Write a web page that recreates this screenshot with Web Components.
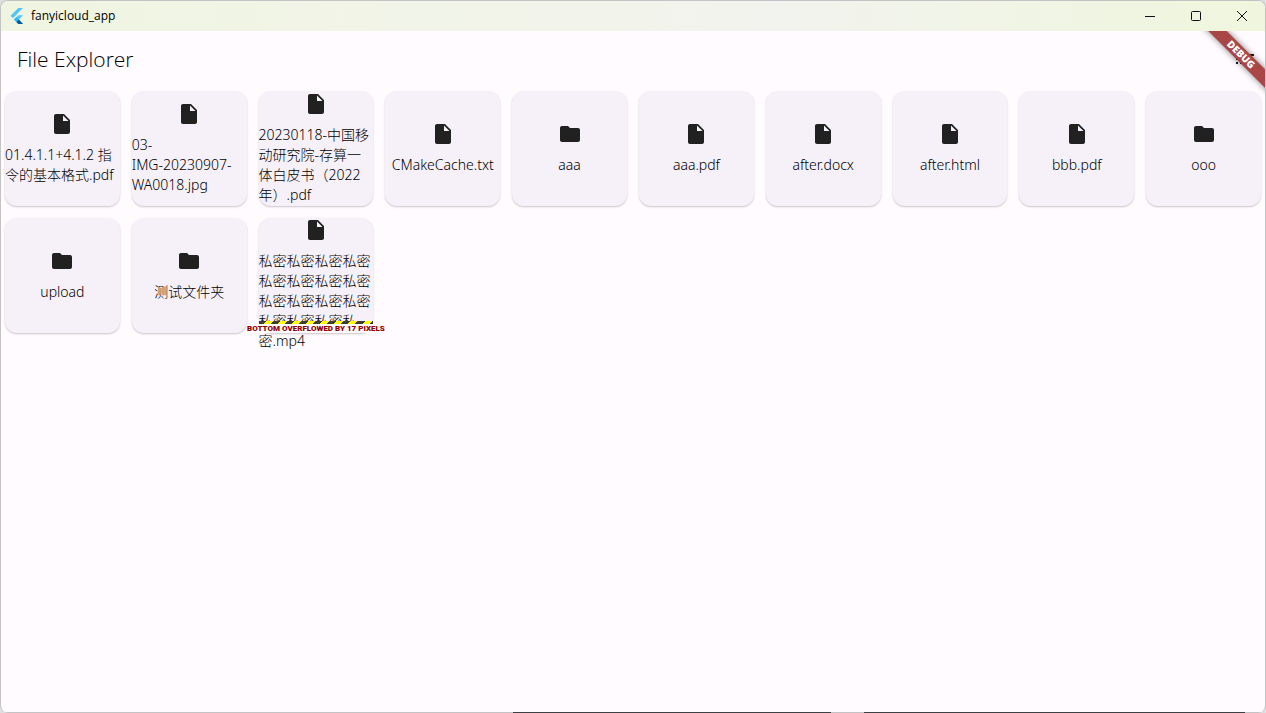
<!DOCTYPE html>
<html lang="zh-CN">
<head>
<meta charset="utf-8">
<title>fanyicloud_app</title>
<style>
html, body { height: 100%; }
body { margin: 0; background: #dedee0; overflow: hidden; }
</style>
</head>
<body>
<app-window caption="fanyicloud_app">
  <app-bar heading="File Explorer"></app-bar>
  <file-grid>
    <file-card>01.4.1.1+4.1.2 指令的基本格式.pdf</file-card>
    <file-card>03-<br>IMG-20230907-WA0018.jpg</file-card>
    <file-card>20230118-中国移动研究院-存算一体白皮书（2022年）.pdf</file-card>
    <file-card>CMakeCache.txt</file-card>
    <file-card kind="folder">aaa</file-card>
    <file-card>aaa.pdf</file-card>
    <file-card>after.docx</file-card>
    <file-card>after.html</file-card>
    <file-card>bbb.pdf</file-card>
    <file-card kind="folder">ooo</file-card>
    <file-card kind="folder">upload</file-card>
    <file-card kind="folder">测试文件夹</file-card>
    <file-card overflow="BOTTOM OVERFLOWED BY 17 PIXELS">私密私密私密私密私密私密私密私密私密私密私密私密私密私密私密私密.mp4</file-card>
  </file-grid>
</app-window>

<script>
const define = (name, markup, setup) => {
  const template = document.createElement('template');
  template.innerHTML = markup;
  customElements.define(name, class extends HTMLElement {
    connectedCallback() {
      if (this.shadowRoot) return;
      const root = this.attachShadow({ mode: 'open' });
      root.append(template.content.cloneNode(true));
      if (setup) setup(this, root);
    }
  });
};

define('flutter-logo', `
<style>
:host { display: block; width: 16px; height: 16px; }
svg { display: block; }
</style>
<svg width="16" height="16" viewBox="0 0 16 16" aria-hidden="true">
  <path fill="#54c5f8" d="M9.3 0H14L3.9 10.2 1.5 7.8z"/>
  <path fill="#54c5f8" d="M9.3 7.3H14L9.9 11.4 14 16H9.3L5 11.6z"/>
  <path fill="#01579b" d="M7.4 13.9 9.8 11.4 14 16H9.3z"/>
  <path fill="#29b6f6" d="M5 11.5 7.4 9.1 9.8 11.5 7.4 13.9z"/>
</svg>`);

define('window-controls', `
<style>
:host { display: flex; align-self: stretch; }
button { width: 46px; margin: 0; padding: 0; border: 0; background: none; color: #111; display: flex; align-items: center; justify-content: center; }
svg { fill: none; stroke: currentColor; }
</style>
<button type="button" aria-label="Minimize"><svg width="12" height="12"><path d="M1 6.5h10"/></svg></button>
<button type="button" aria-label="Maximize"><svg width="12" height="12"><rect x="1.5" y="1.5" width="9" height="9" rx="1"/></svg></button>
<button type="button" aria-label="Close"><svg width="12" height="12"><path d="M1 1l10 10M11 1L1 11"/></svg></button>`);

define('debug-banner', `
<style>
:host { position: absolute; top: 0; right: 0; width: 64px; height: 64px; overflow: hidden; pointer-events: none; }
span { position: absolute; top: 17px; right: -32px; width: 112px; height: 13px; transform: rotate(45deg); background: #a94646; box-shadow: 0 0 6px rgba(0,0,0,.5); color: #fff; font: 900 10px/13px "Noto Sans", "Open Sans", sans-serif; text-align: center; }
</style>
<span>DEBUG</span>`);

define('app-window', `
<style>
:host { display: flex; flex-direction: column; position: relative; box-sizing: border-box; height: 100vh; border: 1px solid #c3c3c5; border-bottom: 0; border-radius: 8px; overflow: hidden; background: #fffbff; color: #1c1b1f; font-family: "Open Sans", "Noto Sans CJK SC", sans-serif; }
:host::after { content: ""; flex: none; height: 1px; background: linear-gradient(90deg, #c3c3c5 40.5%, #3c4043 40.5% 65.7%, #c3c3c5 65.7% 68.3%, #3c4043 68.3% 98.4%, #c3c3c5 98.4%); }
header { flex: none; display: flex; align-items: center; height: 30px; padding-left: 8px; background: linear-gradient(90deg, #f0f5e1, #f2f4ea 40%, #f2f3ee 62%, #f0f5e2 88%, #f0f6de); }
h1 { flex: 1; margin: 0 0 0 6px; color: #000; font: 400 12px/16px "Open Sans", sans-serif; }
main { position: relative; flex: 1; }
</style>
<header><flutter-logo></flutter-logo><h1></h1><window-controls></window-controls></header>
<main><slot></slot><debug-banner></debug-banner></main>`,
(host, root) => { root.querySelector('h1').textContent = host.getAttribute('caption'); });

define('app-bar', `
<style>
:host { display: flex; align-items: center; height: 56px; padding: 0 8px 0 16px; }
h2 { flex: 1; margin: 0; color: #000; font: 300 21px/28px "Open Sans", sans-serif; }
button { width: 24px; height: 24px; margin: 0; padding: 0; border: 0; background: none; color: #1c1b1f; }
svg { display: block; fill: currentColor; }
</style>
<h2></h2>
<button type="button" aria-label="View as list"><svg width="24" height="24" viewBox="0 0 24 24"><path d="M3 13h2v-2H3zm0 4h2v-2H3zm0-8h2V7H3zm4 4h14v-2H7zm0 4h14v-2H7zM7 7v2h14V7z"/></svg></button>`,
(host, root) => { root.querySelector('h2').textContent = host.getAttribute('heading'); });

define('file-grid', `
<style>
:host { display: grid; grid-template-columns: repeat(10, minmax(0, 1fr)); gap: 4px; }
</style>
<slot></slot>`);

define('file-card', `
<style>
:host { display: block; aspect-ratio: 1; min-height: 0; box-sizing: border-box; padding: 4px; }
article { position: relative; box-sizing: border-box; height: 100%; border-radius: 12px; background: #f6f1f9; box-shadow: 0 1px 2px rgba(0,0,0,.22); display: flex; flex-direction: column; align-items: center; justify-content: safe center; }
svg { flex: none; display: block; margin-bottom: 9px; fill: #212121; }
p { margin: 0; color: #000; font-size: 14px; line-height: 20px; font-weight: 300; font-family: "Noto Sans", "Noto Sans CJK SC", sans-serif; }
.stripe { position: absolute; left: 0; right: 0; bottom: 9px; height: 3px; background: repeating-linear-gradient(135deg, #3c3c3c 0 5px, #ffff00 5px 10px); }
.note { position: absolute; left: 50%; bottom: 0; transform: translateX(-50%); white-space: nowrap; background: #fffbff; color: #900000; font: 900 8px/9px Roboto, "Open Sans", sans-serif; }
[hidden] { display: none; }
</style>
<article>
  <svg width="24" height="24" viewBox="0 0 24 24" aria-hidden="true"><path/></svg>
  <p><slot></slot></p>
  <div class="stripe" hidden></div>
  <div class="note" hidden></div>
</article>`,
(host, root) => {
  const shapes = {
    folder: 'M10 4H4c-1.100 0-1.990.9-1.990 2L2 18c0 1.100.9 2 2 2h16c1.100 0 2-.9 2-2V8c0-1.100-.9-2-2-2h-8l-2-2z',
    file: 'M6 2c-1.100 0-1.990.9-1.990 2L4 20c0 1.100.89 2 1.990 2H18c1.100 0 2-.9 2-2V8l-6-6H6zm7 7V3.500L18.500 9H13z'
  };
  root.querySelector('path').setAttribute('d', shapes[host.getAttribute('kind') || 'file']);
  const message = host.getAttribute('overflow');
  if (message) {
    const note = root.querySelector('.note');
    note.textContent = message;
    note.hidden = false;
    root.querySelector('.stripe').hidden = false;
  }
});
</script>
</body>
</html>
